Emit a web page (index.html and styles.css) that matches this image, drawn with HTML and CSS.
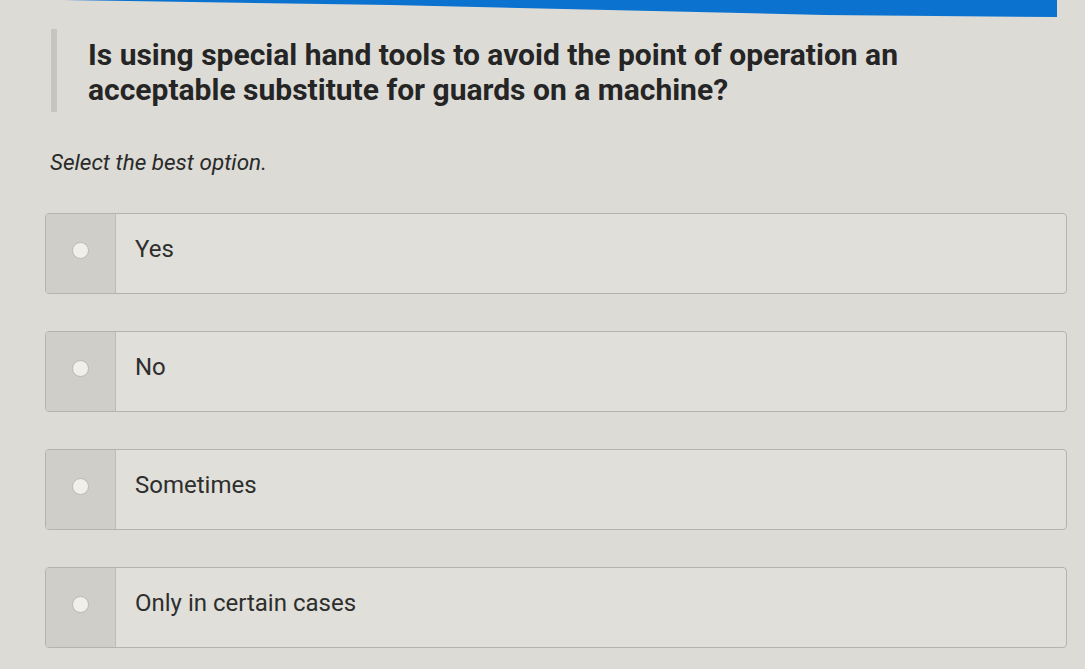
FILE: index.html
```html
<!DOCTYPE html>
<html lang="en">
<head>
<meta charset="utf-8">
<title>Question</title>
<link rel="stylesheet" href="styles.css">
</head>
<body>
  <div class="topbar"></div>
  <main class="quiz">
    <div class="question">
      <p class="question-text">Is using special hand tools to avoid the point of operation an acceptable substitute for guards on a machine?</p>
    </div>
    <p class="instruction">Select the best option.</p>
    <ul class="options">
      <li class="option">
        <span class="radio-cell"><span class="radio"></span></span>
        <span class="label">Yes</span>
      </li>
      <li class="option">
        <span class="radio-cell"><span class="radio"></span></span>
        <span class="label">No</span>
      </li>
      <li class="option">
        <span class="radio-cell"><span class="radio"></span></span>
        <span class="label">Sometimes</span>
      </li>
      <li class="option">
        <span class="radio-cell"><span class="radio"></span></span>
        <span class="label">Only in certain cases</span>
      </li>
    </ul>
  </main>
</body>
</html>
```
FILE: styles.css
```css
html, body {
  margin: 0;
  padding: 0;
}

body {
  background: #dcdbd5;
  font-family: Roboto, "Liberation Sans", Arial, sans-serif;
  color: #2b2b2b;
  width: 1085px;
  height: 669px;
  overflow: hidden;
}

/* blue header strip, tapering toward the left */
.topbar {
  width: 1057px;
  height: 17px;
  background: #0b72d0;
  clip-path: polygon(0 0, 100% 0, 100% 100%, 78% 88%, 37% 30%, 6% 0);
}

.quiz {
  display: flex;
  flex-direction: column;
}

.question {
  margin: 12px 0 0 51px;
  border-left: 6px solid #c6c5c0;
  padding: 8px 0 5px 31px;
}

.question-text {
  margin: 0;
  font-size: 30px;
  line-height: 35px;
  font-weight: 700;
  color: #252525;
  max-width: 860px;
}

.instruction {
  margin: 37px 0 0 50px;
  font-size: 22.5px;
  line-height: 26px;
  font-style: italic;
  color: #2a2a2a;
}

.options {
  list-style: none;
  margin: 38px 0 0 45px;
  padding: 0;
  width: 1022px;
  display: flex;
  flex-direction: column;
  gap: 37px;
}

.option {
  display: flex;
  height: 81px;
  box-sizing: border-box;
  border: 1px solid #b4b3ae;
  border-radius: 4px;
  background: #e0dfd9;
  overflow: hidden;
}

.radio-cell {
  width: 70px;
  flex: none;
  background: #d0cec9;
  border-right: 1px solid #bdbcb7;
  display: flex;
  align-items: center;
  justify-content: center;
  padding-bottom: 6px;
  box-sizing: border-box;
}

.radio {
  width: 17px;
  height: 17px;
  border-radius: 50%;
  background: #f0efeb;
  border: 1px solid #b9b8b3;
  box-sizing: border-box;
}

.label {
  display: flex;
  align-items: center;
  padding: 0 0 9px 19px;
  font-size: 24px;
  color: #2e2e2e;
}
```
